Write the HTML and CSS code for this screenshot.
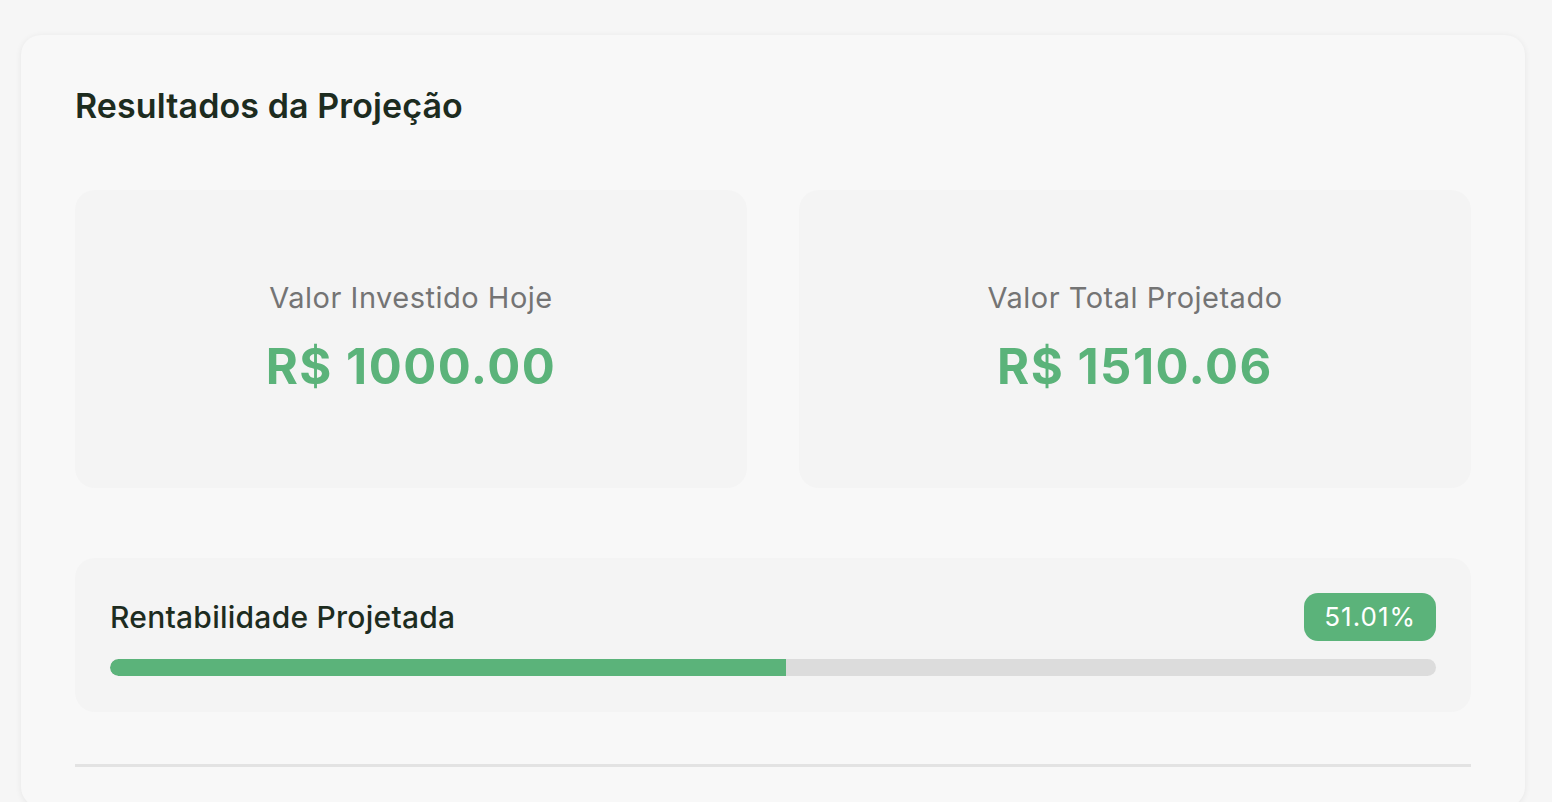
FILE: index.html
```html
<!DOCTYPE html>
<html lang="pt-BR">
<head>
<meta charset="utf-8">
<title>Resultados da Projeção</title>
<link rel="stylesheet" href="styles.css">
</head>
<body>
<section class="card">
  <h2 class="title">Resultados da Projeção</h2>
  <div class="stats">
    <div class="stat">
      <div class="stat-label">Valor Investido Hoje</div>
      <div class="stat-value">R$ 1000.00</div>
    </div>
    <div class="stat">
      <div class="stat-label">Valor Total Projetado</div>
      <div class="stat-value">R$ 1510.06</div>
    </div>
  </div>
  <div class="progress-box">
    <div class="progress-head">
      <span class="progress-label">Rentabilidade Projetada</span>
      <span class="badge">51.01%</span>
    </div>
    <div class="bar"><div class="bar-fill" style="width:51.01%"></div></div>
  </div>
  <hr class="divider">
</section>
</body>
</html>
```
FILE: styles.css
```css
html, body {
  margin: 0;
  padding: 0;
  background: #f6f6f6;
  font-family: Inter, "Noto Sans", "Liberation Sans", sans-serif;
}
body {
  padding: 35px 27px 0 21px;
  overflow: hidden;
  height: 802px;
  box-sizing: border-box;
}
.card {
  background: #f8f8f8;
  border-radius: 20px;
  box-shadow: 0 1px 6px rgba(0, 0, 0, 0.07);
  padding: 50px 54px 40px;
}
.title {
  margin: 0;
  font-size: 34px;
  line-height: 41px;
  font-weight: 600;
  color: #1d2c1f;
  letter-spacing: 0.1px;
}
.stats {
  margin-top: 64px;
  display: grid;
  grid-template-columns: 1fr 1fr;
  gap: 52px;
}
.stat {
  height: 298px;
  background: #f4f4f4;
  border-radius: 20px;
  display: flex;
  flex-direction: column;
  align-items: center;
  justify-content: center;
  gap: 23px;
  padding-bottom: 2px;
  box-sizing: border-box;
}
.stat-label {
  font-size: 29px;
  line-height: 34px;
  color: #747474;
  letter-spacing: 0.5px;
}
.stat-value {
  font-size: 49px;
  line-height: 58px;
  font-weight: 700;
  color: #5bb37a;
  letter-spacing: 1.5px;
}
.progress-box {
  margin-top: 70px;
  background: #f4f4f4;
  border-radius: 20px;
  padding: 35px 35px 36px;
}
.progress-head {
  display: flex;
  justify-content: space-between;
  align-items: center;
  height: 48px;
}
.progress-label {
  font-size: 30px;
  font-weight: 500;
  color: #1d2c1f;
  letter-spacing: 0.25px;
}
.badge {
  background: #5bb37a;
  color: #fff;
  font-size: 26px;
  line-height: 48px;
  padding: 0 20px;
  border-radius: 14px;
  letter-spacing: 1px;
}
.bar {
  margin-top: 18px;
  height: 17px;
  background: #dcdcdc;
  border-radius: 9px;
  overflow: hidden;
}
.bar-fill {
  height: 100%;
  background: #5bb37a;
  border-radius: 9px 0 0 9px;
}
.divider {
  margin: 52px 0 0;
  border: 0;
  height: 3px;
  background: #e3e3e3;
}
```
